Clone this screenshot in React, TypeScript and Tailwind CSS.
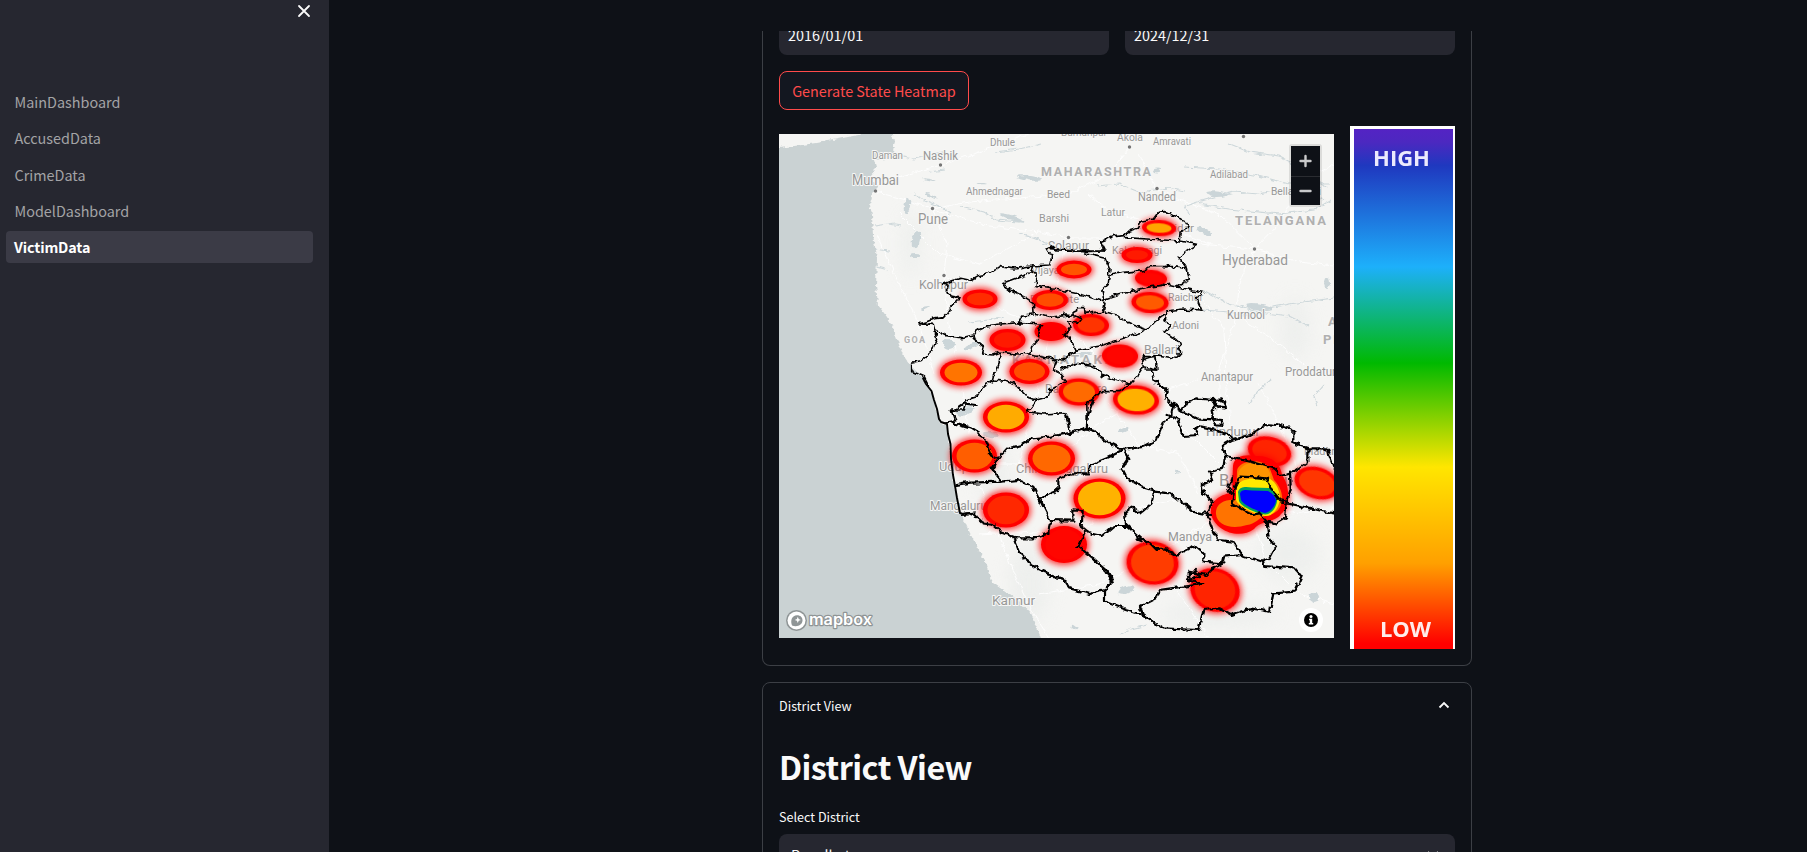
import React from "react";

const FONT =
  "font-['Noto_Sans_CJK_SC','Noto_Sans',sans-serif]";

const pages = ["MainDashboard", "AccusedData", "CrimeData", "ModelDashboard"];

/* District outlines, grouped by map tile; every tile is drawn at three units per pixel. */
const borderTiles: { x: number; y: number; lines: string[] }[] = [
  {
    x: -9,
    y: -9,
    lines: [
      "450,596 470,590 490,582 520,578 532,565 545,545 555,535 570,518 540,512 528,500 535,480 520,478 545,468 572,460 600,466 625,452 660,445 690,425 735,432 775,424 785,424",
      "450,596 490,598 500,640 485,680 450,710 425,715 425,740 460,755 475,785",
      "495,615 530,632 575,638 610,630",
    ],
  },
  {
    x: 171,
    y: 106,
    lines: [
      "245,78 300,75 305,50 290,28 310,20 320,30 400,30 410,42 465,55",
      "245,78 240,95 262,100 258,140 275,142 330,150 400,165 450,182 500,165 590,142 660,133",
      "400,30 465,30 450,0",
      "245,100 200,115 155,132 180,150 230,175 250,188 252,220 300,232 360,225 380,215 380,203 403,203 405,220 460,214",
      "450,182 465,190 460,214 500,225 520,240 550,255 592,270",
      "210,245 218,228 250,225",
      "70,293 85,270 110,258 150,252 210,248 275,252 265,275 262,300 245,320 238,345 180,340 150,336 125,345 95,342 100,320 70,295",
      "345,222 370,225 395,238 385,250 350,245 360,262 345,285 370,310 378,330 340,360 300,355 238,345",
      "378,330 450,318 530,292 592,270 620,240 650,218",
      "150,340 148,370 135,400 130,420 170,425 200,435 230,470 260,480 245,500 232,515 280,522 345,518 352,545",
      "262,482 290,475 300,450 320,440 348,420 330,400 310,390 320,365 300,355",
      "330,390 380,370 420,375 450,390 450,405 490,418 540,433 560,410 580,380 620,390 615,350 580,350 575,365 580,380",
      "540,433 510,455 450,455 430,475 410,490 412,540",
      "605,392 610,425 650,445 645,480",
      "130,420 100,440 80,470 50,480 40,510 5,510 20,540",
      "465,55 480,90 475,130 455,150 462,182",
      "480,105 520,97 580,92 600,80 650,80",
    ],
  },
  {
    x: 271,
    y: -9,
    lines: [
      "160,378 150,350 190,335 225,332 240,318 265,310 275,288 310,282 325,262 345,260 365,270 395,278 415,310 390,325 388,348 440,358 420,370 385,395 410,425 418,465 375,485 400,490 460,502 440,520 455,555 400,552 350,558",
      "160,378 100,380 0,370",
      "225,338 290,342 388,348",
      "345,425 370,425 410,430",
      "340,478 375,485",
      "350,560 345,590 365,600 345,620 385,650 392,680 375,700 320,690 290,700 275,705",
      "320,705 320,735 285,735",
    ],
  },
  {
    x: 171,
    y: 266,
    lines: [
      "10,70 60,85 100,110 120,160 145,175 125,205 155,245",
      "145,175 170,147 215,135 245,115 300,110 370,97 410,85 415,40 430,0",
      "352,50 362,95",
      "410,85 440,95 450,115 520,150 580,140 620,120 640,70 665,45",
      "520,150 535,175 515,205 530,235 580,262 612,272 605,310 570,340 545,320 525,335 528,375 590,430",
      "515,152 470,175 420,195 415,220 360,220 325,235 325,270 290,285 270,300 250,260 205,240 155,245 60,248 20,255",
      "270,300 285,330 300,360 295,400 250,415 200,415 160,400 130,375 100,370 80,350 75,340 40,345",
      "300,360 370,362 370,328 398,330 395,380 420,400 455,408 490,378 528,378",
      "405,395 385,440 430,475 470,510 490,545",
      "195,418 215,470 260,505 320,530 350,540",
    ],
  },
  {
    x: -9,
    y: 246,
    lines: ["530,130 555,125 545,95 580,70 620,75"],
  },
  {
    x: 271,
    y: 246,
    lines: [
      "310,0 350,30 345,50 370,75 365,100",
      "370,72 395,90 410,65 440,55 490,60 498,80 485,95 490,118 440,115 400,95 370,75",
      "490,60 515,58 528,82 505,80 490,62",
      "490,118 515,120 518,138 498,136 488,118",
      "350,105 385,118 400,168 445,165 435,150 445,138 500,150 535,165 545,180 600,165 635,145 640,132 680,135 730,150 730,190 775,205 775,245 735,275 690,285 670,265 600,245 525,228 518,195 545,180",
      "525,228 520,265 480,275 490,300 455,315 460,340 490,360 470,400 485,440 505,480 550,485 578,525 520,530 515,550 460,545 460,520 430,495 415,508 380,525 350,508 320,510 300,490 260,475",
      "315,335 360,340 400,370 430,395 480,405",
      "545,370 555,320 570,290 620,292 650,295 670,335 690,360 710,365 705,415 680,430 650,425 630,400 610,405 570,385 545,370",
      "550,345 535,325 545,290",
      "720,275 722,330 710,370 760,380 800,390 852,400",
      "650,425 655,470 678,500 660,535 635,545 575,525",
      "635,545 640,558 735,565 755,590 735,635 670,640 660,695 600,685 545,705 510,685 460,690 445,750 340,745 300,720 280,705 270,680 320,655 330,630 400,620 460,612 420,602 415,575 470,585 490,565 520,550",
      "415,600 450,590 435,570",
      "280,705 230,690 165,665 165,630 188,605 150,555 130,535",
      "165,630 120,642 60,625 40,595 0,590",
      "775,205 830,205 852,265",
    ],
  },
];

/* cx, cy, rx, ry, core colour, tilt */
const blobs: [number, number, number, number, string, number][] = [
  [380, 94, 17, 8, "#ffa400", 3],
  [358, 121, 15.5, 8, "#ff1a00", 0],
  [295, 135.5, 17.5, 9, "#ff5500", 0],
  [372, 144.5, 16, 8.5, "#ff0600", 3],
  [201, 165, 17.5, 9.5, "#ff2c00", 0],
  [271, 166, 18, 10, "#ff4c00", 0],
  [371, 168.5, 18.5, 10.5, "#ff5a00", 3],
  [272, 197.5, 16.5, 9.5, "#ff0000", 0],
  [312, 191, 18, 11, "#ff3400", 2],
  [228.5, 206, 18, 11, "#ff1a00", 0],
  [341, 222, 18, 11.5, "#ff0500", 2],
  [182, 238.5, 21, 13, "#ff7400", 0],
  [250.5, 237.5, 20, 12.5, "#ff4e00", 0],
  [300, 258, 20.5, 13.5, "#ff6a00", 2],
  [357, 266, 23, 14.5, "#ffb000", 4],
  [227, 283, 23, 15.5, "#ffab00", 0],
  [195.5, 322, 22.5, 16.5, "#ff5e00", 0],
  [272.5, 324.5, 23.5, 17, "#ff6800", 0],
  [227, 376, 23, 17.5, "#ff2800", 0],
  [320.5, 364.5, 26, 20, "#ffb200", 0],
  [285, 410.5, 23, 18.5, "#ff0600", 0],
  [373.5, 429, 26, 21.5, "#ff3c00", 8],
  [436, 456, 25, 21.5, "#ff2400", 20],
  [490.5, 317.5, 22, 14.5, "#ff2400", 14],
  [538, 349, 23, 15.5, "#ff3600", 18],
];

/* text, x, y, width, size */
const labels: [string, number, number, number, number][] = [
  ["Daman", 93, 24.5, 31, 10],
  ["Nashik", 144, 25.5, 35, 12],
  ["Mumbai", 73, 50.5, 47, 14],
  ["Dhule", 211, 12, 25, 10.5],
  ["Ahmednagar", 187, 60.5, 57, 10.5],
  ["Beed", 268, 63.5, 23, 10.5],
  ["Barshi", 260, 88, 30, 10.5],
  ["Pune", 139, 89.5, 30, 14],
  ["Kolhapur", 140, 154.5, 49, 12.5],
  ["Solapur", 269, 115.5, 41, 12],
  ["Vijayapura", 252, 140, 50, 11],
  ["Bagalkote", 251, 168.5, 49, 11],
  ["Burhanpur", 282, 1.5, 46, 10.5],
  ["Akola", 338, 7, 26, 11.5],
  ["Amravati", 374, 11, 38, 10.5],
  ["Adilabad", 431, 43.5, 38, 10.5],
  ["Bellampalli", 492, 61, 50, 10.5],
  ["Nanded", 359, 67, 38, 12],
  ["Latur", 322, 81.5, 24, 10.5],
  ["Kalaburagi", 333, 120, 50, 11],
  ["Bidar", 388, 98, 27, 11],
  ["Hyderabad", 443, 131, 66, 14],
  ["Raichur", 389, 167, 35, 11.5],
  ["Kurnool", 448, 184.5, 38, 12],
  ["Adoni", 393, 194.5, 27, 11.5],
  ["Ballari", 365, 220, 34, 12],
  ["Anantapur", 422, 246.5, 52, 12],
  ["Proddatur", 506, 242, 51, 12],
  ["Davanagere", 266, 259, 62, 12],
  ["Hindupur", 427, 302, 54, 12],
  ["Madanapalle", 525, 321, 62, 11.5],
  ["Udupi", 160, 336.5, 33, 12],
  ["Chikkamagaluru", 237, 339, 92, 12.5],
  ["Mangaluru", 151, 375.5, 57, 12.5],
  ["Bengaluru", 440, 352, 74, 16],
  ["Mandya", 389, 406.5, 44, 12.5],
  ["Kannur", 213, 470.5, 43, 13],
];

const regions: [string, number, number, number, number][] = [
  ["MAHARASHTRA", 262, 42, 110, 12.5],
  ["TELANGANA", 456, 91, 91, 13],
  ["KARNATAKA", 233, 230, 102, 13.5],
  ["GOA", 125, 209, 21, 9],
  ["ANDHRA", 549, 192, 60, 13],
  ["PRADESH", 544, 210, 70, 13],
];

const cities: [number, number][] = [
  [161.5, 31],
  [96.5, 57],
  [153.5, 74.5],
  [165, 141.5],
  [350.5, 13],
  [378, 54.5],
  [289.5, 103.5],
  [464.5, 2.5],
  [475.5, 115],
];

const roads = [
  "98,58 126,66 154,75 190,68 240,64 290,60 330,40 351,14",
  "154,76 168,110 165,142 170,190 182,240 190,300",
  "154,76 210,92 260,98 290,104 350,104 420,110 476,115",
  "98,50 130,40 162,31 212,14 250,0",
  "476,115 460,150 458,180 440,235 440,290 455,340 460,360",
  "476,115 440,80 400,66 378,55 360,20",
  "476,115 520,128 555,132",
  "476,115 500,90 520,50 555,30",
  "290,104 280,140 275,180 262,240 250,290 240,330",
  "165,142 230,180 300,205 345,250 400,290 440,330",
  "458,182 500,210 530,235 555,240",
  "424,166 445,195 447,245 452,300",
  "420,245 370,262 320,290 270,330 200,330",
  "460,370 410,400 370,425 320,450 260,460",
  "370,425 400,460 430,504",
  "200,350 220,400 235,440 255,480 270,504",
  "200,400 235,398 290,400 330,380 400,365",
  "460,370 500,380 555,375",
  "470,380 490,430 520,460 555,470",
  "480,250 505,300 520,340 555,345",
  "98,100 120,150 140,190 155,240",
  "120,80 160,120 200,130 260,98",
  "310,60 330,78 380,90 430,110",
  "420,360 400,320 360,310 330,270",
];

const streams = [
  "135,60 145,66 160,72 172,80",
  "182,72 205,78 218,86 240,88",
  "110,90 122,92",
  "240,100 255,104 270,110",
  "216,18 240,15 262,10",
  "318,52 340,50 360,58 390,54 405,57",
  "410,80 406,72 425,66 455,58 480,60 520,52 545,66",
  "420,70 450,75 500,80 535,76 552,66",
  "450,10 470,18 500,22 530,38 548,54",
  "405,33 440,35 480,42 510,50 550,50",
  "424,156 450,170 480,178 510,182 530,192",
  "480,176 510,170 555,164",
  "424,176 450,178 470,182",
  "493,245 480,256 470,270",
  "545,250 535,262 538,272",
  "190,188 210,186 226,183",
  "96,115 110,117",
  "96,92 116,89",
  "98,133 109,136",
  "342,500 352,495 368,491",
  "165,36 150,38",
  "168,18 135,25 120,22",
];

const lakes: [number, number, number, number, number][] = [
  [250, 44, 12, 2.2, 8],
  [203, 50, 5, 1.2, 5],
  [233, 84, 13, 2.5, 18],
  [137, 106, 4, 9, 10],
  [136, 122, 5, 2, 0],
  [128, 72, 3, 8, 10],
  [150, 46, 7, 1.2, 10],
  [152, 62, 6, 1.5, 25],
  [438, 60, 10, 2.5, 5],
  [378, 37, 4, 2.5, 0],
  [425, 97, 8, 2.5, 28],
  [480, 173, 14, 3.5, 8],
  [548, 149, 3, 6, 0],
  [170, 210, 6, 5, 0],
  [192, 212, 8, 2, -20],
  [303, 221, 10, 2.5, -10],
  [186, 277, 9, 4, -20],
  [345, 296, 6, 2, -25],
  [347, 456, 9, 4, -20],
  [535, 463, 5, 5, 20],
  [398, 338, 3, 1.5, 0],
  [146, 174, 5, 1.5, -15],
  [212, 301, 8, 3, 10],
  [295, 493, 4, 2, 40],
];

function StateMap() {
  return (
    <svg className="block h-[504px] w-[555px] shrink-0" viewBox="0 0 555 504">
      <defs>
        <filter id="rough" x="-5%" y="-5%" width="110%" height="110%" colorInterpolationFilters="sRGB">
          <feTurbulence type="fractalNoise" baseFrequency="0.16" numOctaves="2" seed="7" result="n" />
          <feDisplacementMap in="SourceGraphic" in2="n" scale="6" xChannelSelector="R" yChannelSelector="G" />
          <feGaussianBlur stdDeviation="0.25" />
        </filter>
        <filter id="shore" x="-5%" y="-5%" width="110%" height="110%" colorInterpolationFilters="sRGB">
          <feTurbulence type="fractalNoise" baseFrequency="0.13 0.3" numOctaves="2" seed="3" result="n" />
          <feDisplacementMap in="SourceGraphic" in2="n" scale="5" xChannelSelector="R" yChannelSelector="G" />
        </filter>
        <filter id="glow" x="-60%" y="-80%" width="220%" height="260%" colorInterpolationFilters="sRGB">
          <feGaussianBlur stdDeviation="3.2" />
        </filter>
        <filter id="soft" x="-20%" y="-20%" width="140%" height="140%" colorInterpolationFilters="sRGB">
          <feGaussianBlur stdDeviation="0.7" />
        </filter>
        <filter id="haze" x="-50%" y="-50%" width="200%" height="200%" colorInterpolationFilters="sRGB">
          <feGaussianBlur stdDeviation="9" />
        </filter>
      </defs>
      <rect width="555" height="504" fill="#f5f5f3" />
      <g fill="#eceeec" opacity="0.8" filter="url(#haze)">
        <ellipse cx="132" cy="110" rx="9" ry="34" />
        <ellipse cx="516" cy="195" rx="14" ry="32" />
        <ellipse cx="510" cy="420" rx="30" ry="26" />
        <ellipse cx="440" cy="480" rx="60" ry="12" />
        <ellipse cx="215" cy="340" rx="14" ry="40" />
        <ellipse cx="250" cy="450" rx="20" ry="40" />
      </g>
      <g fill="none" stroke="#fdfdfd" strokeWidth="1">
        {roads.map((p) => (
          <polyline key={p} points={p} filter="url(#rough)" />
        ))}
      </g>
      <g filter="url(#shore)">
        <path
          fill="#cad2d3"
          d="M-10 14L0 14L38 9L74 2L108-4L116 6L114 18L118 24L96 26L98 33L93 38L94 48L99 53L94 58L91 71L93 81L94 101L98 124L97 151L99 171L108 183L114 194L119 208L124 221L131 231L146 246L154 263L161 288L168 293L171 313L174 346L181 376L188 393L198 413L208 431L214 449L238 466L254 483L266 515L-10 515Z"
        />
        <g fill="none" stroke="#cdd7da" strokeWidth="1.1">
          {streams.map((p) => (
            <polyline key={p} points={p} />
          ))}
        </g>
        <g fill="#cbd5d8">
          {lakes.map(([cx, cy, rx, ry, t], i) => (
            <ellipse key={i} cx={cx} cy={cy} rx={rx} ry={ry} transform={`rotate(${t} ${cx} ${cy})`} />
          ))}
        </g>
      </g>
      <g
        className="font-[Roboto,sans-serif]"
        fill="#979797"
        stroke="#f7f7f6"
        strokeWidth="2"
        strokeLinejoin="round"
        paintOrder="stroke"
      >
        {labels.map(([t, x, y, w, s]) => (
          <text key={t} x={x} y={y} textLength={w} lengthAdjust="spacingAndGlyphs" fontSize={s}>
            {t}
          </text>
        ))}
        {regions.map(([t, x, y, w, s]) => (
          <text key={t} x={x} y={y} textLength={w} fontSize={s} fontWeight="700" fill="#b0b0b0">
            {t}
          </text>
        ))}
      </g>
      <g fill="#757575">
        {cities.map(([cx, cy]) => (
          <circle key={cx} cx={cx} cy={cy} r="1.7" />
        ))}
      </g>
      {blobs.map(([cx, cy, rx, ry, c, t], i) => (
        <g key={i} transform={`rotate(${t} ${cx} ${cy})`}>
          <ellipse cx={cx} cy={cy} rx={rx + 2} ry={ry + 2} fill="#ff0000" opacity="0.8" filter="url(#glow)" />
          <ellipse cx={cx} cy={cy} rx={rx} ry={ry} fill="#ff0000" filter="url(#soft)" />
          <ellipse cx={cx} cy={cy} rx={rx - 4.5} ry={ry - 3.2} fill={c} filter="url(#soft)" />
        </g>
      ))}
      <g>
        <path
          d="M454 332C455 322 467 320 476 322C489 321 501 327 503 341C511 352 512 372 502 380C496 389 482 386 475 395C460 406 436 397 432 380C430 367 442 360 453 359Z"
          fill="#ff0000"
          stroke="#ff0000"
          strokeWidth="3"
          opacity="0.8"
          filter="url(#glow)"
        />
        <path
          d="M454 332C455 322 467 320 476 322C489 321 501 327 503 341C511 352 512 372 502 380C496 389 482 386 475 395C460 406 436 397 432 380C430 367 442 360 453 359Z"
          fill="#ff0000"
          filter="url(#soft)"
        />
        <path
          d="M458 337C459 326 484 323 491 335L495 346C501 352 504 360 503 367C502 376 495 381 486 382C480 384 476 390 468 391C452 396 438 391 437 380C436 370 446 365 457 366Z"
          fill="#ff7300"
          filter="url(#soft)"
        />
        <path d="M459 341C460 326 486 324 491 339L492 347H458Z" fill="#ff9500" filter="url(#soft)" />
        <path
          d="M457 352C461 346 470 344 478 345L491 345C497 348 501 357 501 364C500 376 492 383 486 382C478 381 460 374 457 366Z"
          fill="#ffe900"
          filter="url(#soft)"
        />
        <path
          d="M459 358C461 352 467 353 473 353.500L490 354C495 356 499 362 498 367C497 375 491 381 486 380.500C477 379 462 373 460 367Z"
          fill="#00a060"
          filter="url(#soft)"
        />
        <path d="M461 360C462 355 467 356 473 356.500L489 357C493 359 497 363 497 367C496 373 490 379 486 379C478 377 464 371 462 366Z" fill="#0000ff" />
      </g>
      <g filter="url(#rough)">
        {borderTiles.map((tile, i) => (
          <g
            key={i}
            transform={`translate(${tile.x} ${tile.y}) scale(0.33333)`}
            fill="none"
            stroke="#000000"
            strokeWidth={tile.y > 200 ? 6.6 : 4.8}
            strokeLinejoin="round"
            strokeLinecap="round"
          >
            {tile.lines.map((l) => (
              <polyline key={l} points={l} />
            ))}
          </g>
        ))}
      </g>
      <polyline
        points="144,244 147,250 152.500,257 155,266 158,275 160,285 162,288 168,290 169,300 171.500,310 172,325 174,341 176,352 178,364 181,379 184,380 190,379 193,381"
        fill="none"
        stroke="#000000"
        strokeWidth="1.900"
        strokeLinejoin="round"
      />
      <g>
        <circle cx="17.5" cy="486.5" r="10.5" fill="#8f9596" />
        <circle cx="17.5" cy="486.5" r="9" fill="#fff" />
        <path d="M13 491.5c-2-5 0-10 5-10.200c3.500 0 5.500 2.200 5.500 5c0 5-5.500 7-10.500 5.200z" fill="#8f9596" />
        <path d="M18.800 482.800l.9 2.200 2.200.9-2.200.9-.9 2.200-.9-2.200-2.200-.9 2.200-.9z" fill="#fff" />
        <text
          x="30"
          y="491"
          fontSize="15.500"
          fontWeight="600"
          textLength="63"
          lengthAdjust="spacingAndGlyphs"
          fill="#fff"
          stroke="#8f9596"
          strokeWidth="2.400"
          strokeLinejoin="round"
          paintOrder="stroke"
          className="font-[Inter,sans-serif]"
        >
          mapbox
        </text>
      </g>
      <g>
        <circle cx="532" cy="486" r="12" fill="#fff" />
        <circle cx="532" cy="486" r="7" fill="#000" />
        <circle cx="532" cy="482.400" r="1.500" fill="#fff" />
        <path d="M530 484.800h3.200v4.200h1v1.400h-4.400v-1.400h1v-2.800h-.8z" fill="#fff" />
      </g>
      <g>
        <rect x="510" y="10" width="33" height="63" rx="3" fill="#000" opacity="0.1" />
        <rect x="512" y="12" width="29" height="59" fill="#0e1117" />
        <path d="M512 42.500h29" stroke="#2a2c31" />
        <path d="M526.500 22v10M521.500 27h10M521.500 57h10" stroke="#c9cacb" strokeWidth="2.400" strokeLinecap="round" />
      </g>
    </svg>
  );
}

function Legend() {
  return (
    <div className="-mt-2 h-[523px] w-[105px] shrink-0 bg-white pt-[3px] pr-[2px] pl-[4px]">
      <div className="flex h-[520px] flex-col items-center justify-between bg-[linear-gradient(to_bottom,#5423c4_0%,#4c28c0_2.500%,#1f38bf_7%,#1db0fb_26.500%,#00b900_45%,#ffe600_65%,#ffa000_83.500%,#ff0000_99%)] pt-[15px] pb-[8px] font-['Open_Sans',sans-serif] text-[22px] leading-[26px] font-bold text-[#eceafd]">
        <span className="-ml-1 blur-[0.6px]">HIGH</span>
        <span className="ml-1 text-[#ffeceb] blur-[0.6px]">LOW</span>
      </div>
    </div>
  );
}

function DateInput({ value }: { value: string }) {
  return (
    <div className="flex h-10 w-[330px] items-center rounded-lg bg-[#262730] px-[9px] text-[14.4px]">
      {value}
    </div>
  );
}

export default function App() {
  return (
    <div className={`flex h-[852px] w-full overflow-hidden bg-[#0e1117] text-[#fafafa] ${FONT}`}>
      <aside className="h-full w-[329px] shrink-0 bg-[#262730]">
        <div className="flex h-[22px] justify-end pr-[18px]">
          <svg className="mt-[4px] size-[14px]" viewBox="0 0 14 14" stroke="#fafafa" strokeWidth="1.800" strokeLinecap="round">
            <path d="M2 2l10 10M12 2L2 12" />
          </svg>
        </div>
        <nav className="mt-[64px] flex flex-col gap-[4.25px] pr-[16px] pl-[6px] text-[14.4px] leading-8 text-[#a3a3a6]">
          {pages.map((p) => (
            <a key={p} className="h-8 px-[8.500px]">
              {p}
            </a>
          ))}
          <a className="h-8 rounded bg-[#3b3b46] px-2 font-bold tracking-[-0.15px] text-white">VictimData</a>
        </nav>
      </aside>

      <main className="flex-1 pl-[433px]">
        <div className="mt-[31px] flex h-[821px] w-[710px] flex-col overflow-hidden">
          <section className="h-[635px] shrink-0 rounded-b-lg border border-t-0 border-[#3c3f45] px-4">
            <div className="-mt-4 flex gap-4">
              <DateInput value="2016/01/01" />
              <DateInput value="2024/12/31" />
            </div>
            <button className="mt-4 flex h-[39px] w-[190px] items-center justify-center rounded-lg border border-[#ff4b4b] bg-[#131720] text-[14.4px] text-[#ff4b4b]">
              Generate State Heatmap
            </button>
            <div className="mt-6 flex justify-between">
              <StateMap />
              <Legend />
            </div>
          </section>

          <section className="mt-4 h-[300px] shrink-0 rounded-lg border border-[#3c3f45] px-4">
            <div className="mt-[11px] flex h-6 items-center justify-between text-[12.6px]">
              <span>District View</span>
              <svg className="mr-[5px] mb-[3px] h-[8px] w-[12px]" viewBox="0 0 12 8" fill="none" stroke="#fafafa" strokeWidth="1.800">
                <path d="M1.500 6.500L6 2l4.500 4.500" />
              </svg>
            </div>
            <h2 className="mt-[25px] flex h-[46px] items-center text-[32.4px] font-bold tracking-[-0.55px]">District View</h2>
            <label className="mt-[16px] flex h-[24px] items-center text-[12.6px]">Select District</label>
            <div className="mt-[5px] flex h-10 items-center justify-between rounded-lg bg-[#262730] px-3 text-[14.4px]">
              <span className="pt-px">Bagalkot</span>
              <svg className="mt-[2px] mr-0.5 size-4" viewBox="0 0 16 16" fill="none" stroke="#fafafa" strokeWidth="1.800">
                <path d="M3 5l5 5 5-5" />
              </svg>
            </div>
          </section>
        </div>
      </main>
    </div>
  );
}
